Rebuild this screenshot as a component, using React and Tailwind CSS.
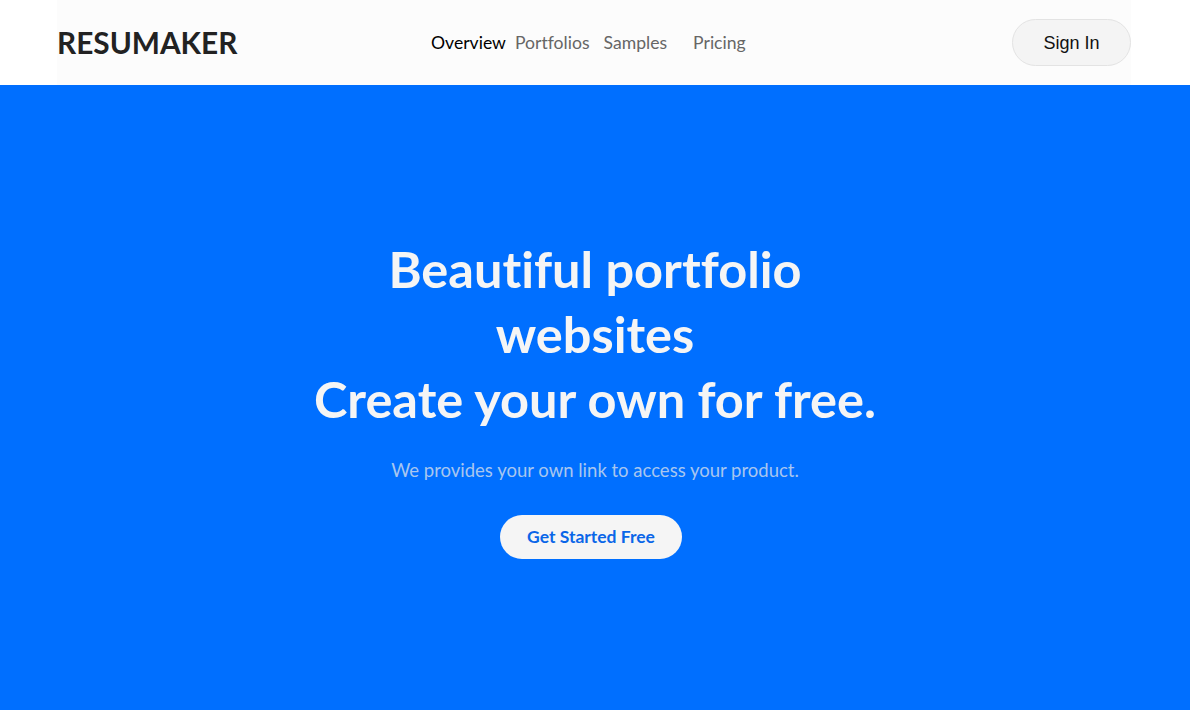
import React from "react";

const navLinks = [
  { label: "Overview", active: true, cls: "mr-[9px]" },
  { label: "Portfolios", cls: "mr-[14px]" },
  { label: "Samples", cls: "mr-[26px]" },
  { label: "Pricing", cls: "" },
];

export default function App() {
  return (
    <div className="min-h-screen w-[1190px] bg-white font-['Lato',sans-serif] [font-variant-ligatures:none]">
      <header className="h-[85px] bg-white">
        <div className="ml-[57px] flex h-full w-[1074px] items-center bg-[#fcfcfc]">
          <a href="#" className="w-[374px] pt-[1px] text-[29.8px] font-bold text-[#222]">
            RESUMAKER
          </a>

          <nav className="flex items-center pt-[2px] text-[17.6px]">
            {navLinks.map((l) => (
              <a
                key={l.label}
                href="#"
                className={`${l.cls} ${l.active ? "text-black" : "text-[#666]"}`}
              >
                {l.label}
              </a>
            ))}
          </nav>

          <div className="flex flex-1 justify-end">
            <button className="h-[47px] w-[119px] rounded-full border border-[#e3e3e3] bg-[#f4f4f4] pt-[1px] font-['Liberation_Sans',Arial,sans-serif] text-[18px] text-[#111]">
              Sign In
            </button>
          </div>
        </div>
      </header>

      <section className="flex h-[625px] flex-col items-center bg-[#006fff] pt-[151px] text-center">
        <h1 className="max-w-[600px] text-[50.5px] font-bold leading-[65px] text-[#f5f5f5]">
          Beautiful portfolio websites
          <br />
          Create your own for free.
        </h1>
        <p className="mt-[26px] text-[18.5px] text-[#a8c6ef]">
          We provides your own link to access your product.
        </p>
        <button className="mr-[8px] mt-[30px] h-[44px] w-[182px] rounded-full bg-[#f5f5f5] text-[17.5px] font-bold text-[#0a66e8]">
          Get Started Free
        </button>
      </section>
    </div>
  );
}
